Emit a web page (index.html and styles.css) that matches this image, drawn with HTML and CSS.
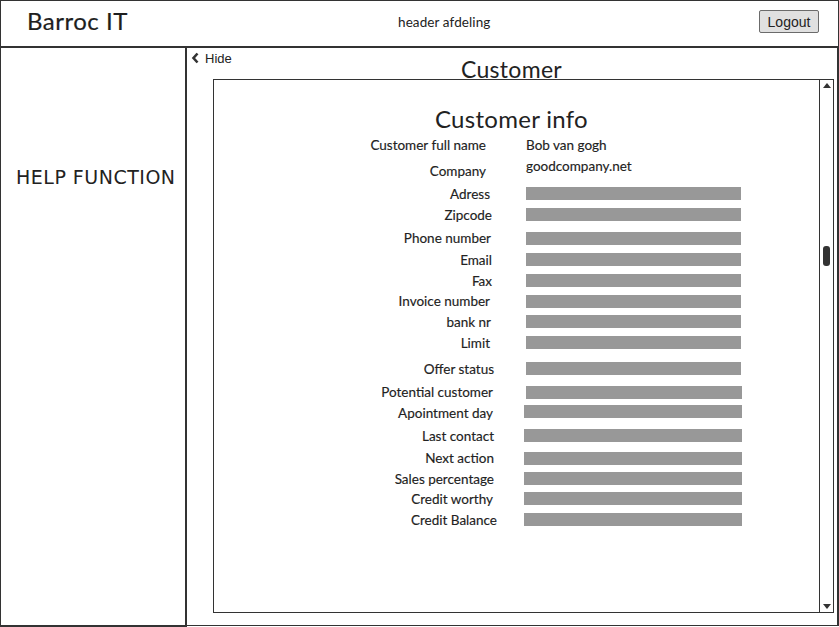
FILE: index.html
```html
<!DOCTYPE html>
<html>
<head>
<meta charset="utf-8">
<link rel="stylesheet" href="styles.css">
</head>
<body>
<div class="app">
  <header class="header">
    <div class="brand">Barroc IT</div>
    <div class="dept">header afdeling</div>
    <button class="logout">Logout</button>
  </header>
  <div class="body-row">
    <aside class="sidebar">
      <div class="help">HELP FUNCTION</div>
    </aside>
    <main class="main">
      <div class="hide">
        <svg class="chev" width="9" height="12" viewBox="0 0 9 12"><polyline points="6.5,1.5 2.5,6 6.5,10.5" fill="none" stroke="#333" stroke-width="2.6"/></svg>
        <span>Hide</span>
      </div>
      <h1 class="title">Customer</h1>
      <section class="panel">
        <div class="content">
          <h2 class="info-title">Customer info</h2>
          <div class="form">
            <div class="row h26"><span class="lbl lbl-short">Customer full name</span><span class="val">Bob van gogh</span></div>
            <div class="row h23"><span class="lbl lbl-short">Company</span><span class="val val-high">goodcompany.net</span></div>
            <div class="row"><span class="lbl lbl-r490">Adress</span><span class="bar"></span></div>
            <div class="row h23"><span class="lbl">Zipcode</span><span class="bar"></span></div>
            <div class="row h22"><span class="lbl lbl-r491">Phone number</span><span class="bar bar-low"></span></div>
            <div class="row"><span class="lbl">Email</span><span class="bar"></span></div>
            <div class="row h20"><span class="lbl">Fax</span><span class="bar"></span></div>
            <div class="row"><span class="lbl lbl-r490">Invoice number</span><span class="bar bar-low"></span></div>
            <div class="row"><span class="lbl lbl-r491">bank nr</span><span class="bar"></span></div>
            <div class="row h26"><span class="lbl lbl-r490">Limit</span><span class="bar"></span></div>
            <div class="row h23"><span class="lbl lbl-r494">Offer status</span><span class="bar"></span></div>
            <div class="row"><span class="lbl lbl-r493">Potential customer</span><span class="bar bar-long bar-low"></span></div>
            <div class="row h23"><span class="lbl lbl-r493">Apointment day</span><span class="bar bar-wide bar-high"></span></div>
            <div class="row h22"><span class="lbl lbl-r494">Last contact</span><span class="bar bar-wide"></span></div>
            <div class="row"><span class="lbl lbl-r494">Next action</span><span class="bar bar-wide bar-low"></span></div>
            <div class="row h20"><span class="lbl lbl-r494">Sales percentage</span><span class="bar bar-wide"></span></div>
            <div class="row"><span class="lbl lbl-r493">Credit worthy</span><span class="bar bar-wide"></span></div>
            <div class="row"><span class="lbl lbl-r497">Credit Balance</span><span class="bar bar-wide"></span></div>
          </div>
        </div>
        <div class="scrollbar">
          <span class="arrow-up"></span>
          <span class="thumb"></span>
          <span class="arrow-down"></span>
        </div>
      </section>
    </main>
  </div>
</div>
</body>
</html>
```

FILE: styles.css
```css
* { box-sizing: border-box; }
html, body { margin: 0; padding: 0; background: #fff; }
body {
  font-family: "Lato", "Open Sans", sans-serif;
  color: #222;
}
.app {
  width: 839px;
  height: 627px;
  overflow: hidden;
}
.header {
  height: 48px;
  border: 1.5px solid #333;
  border-bottom: 2px solid #333;
  display: flex;
  align-items: center;
  position: relative;
  padding: 0 19px 0 26px;
}
.brand {
  font-size: 24px;
  font-family: "Lato", sans-serif;
  letter-spacing: 0.5px;
  color: #1e1e1e;
  margin-top: -6px;
  -webkit-text-stroke: 0.2px #1e1e1e;
}
.dept {
  position: absolute;
  left: 397px;
  top: 13px;
  font-size: 13.5px;
  letter-spacing: 0.1px;
  font-family: "Lato", sans-serif;
}
.logout {
  margin-left: auto;
  margin-top: -4px;
  width: 60px;
  height: 23px;
  background: #e0e0e0;
  border: 1px solid #6b6b6b;
  border-radius: 2px;
  font-family: "Liberation Sans", Arial, sans-serif;
  font-size: 14px;
  color: #222;
  padding: 0;
}
.body-row {
  display: flex;
  height: 579px;
  margin-top: -1px;
}
.sidebar {
  width: 187px;
  height: 580px;
  border: 2px solid #333;
  border-top: none;
  border-left-width: 1.5px;
  display: flex;
  flex-direction: column;
}
.help {
  margin-top: 119px;
  padding-left: 15px;
  font-family: "DejaVu Sans", sans-serif;
  font-size: 19px;
  letter-spacing: 0.5px;
  color: #222;
}
.main {
  flex: 1;
  margin-left: -1px;
  height: 579px;
  border-right: 2px solid #333;
  border-bottom: 1.5px solid #333;
  display: flex;
  flex-direction: column;
  position: relative;
}
.hide {
  display: flex;
  align-items: center;
  gap: 5px;
  margin: 3px 0 0 5px;
  font-size: 13px;
  font-family: "Liberation Sans", Arial, sans-serif;
  height: 16px;
}
.chev { display: block; }
.title {
  margin: -9px 0 0 0;
  height: 22px;
  text-align: center;
  font-family: "Lato", sans-serif;
  font-weight: normal;
  font-size: 23px;
  line-height: 25px;
  letter-spacing: 0.3px;
  position: relative;
  z-index: 1;
}
.panel {
  margin: 0 3px 0 27px;
  height: 534px;
  border: 1.5px solid #333;
  display: flex;
}
.content {
  flex: 1;
  display: flex;
  flex-direction: column;
}
.info-title {
  margin: 25px 0 0 0;
  padding-right: 10px;
  text-align: center;
  font-family: "Lato", sans-serif;
  font-weight: normal;
  font-size: 24px;
  line-height: 28px;
  letter-spacing: 0.3px;
}
.form {
  display: flex;
  flex-direction: column;
  margin-top: 4px;
}
.row {
  height: 21px;
  display: flex;
  align-items: flex-start;
  position: relative;
}
.h20 { height: 20px; }
.h22 { height: 22px; }
.h23 { height: 23px; }
.h26 { height: 26px; }
.lbl {
  width: 278px;
  text-align: right;
  font-family: "Lato", sans-serif;
  font-size: 13.5px;
  line-height: 16px;
  white-space: nowrap;
  flex: none;
  -webkit-text-stroke: 0.15px #222;
}
.lbl-short { width: 272px; }
.lbl-r490 { width: 276px; }
.lbl-r491 { width: 277px; }
.lbl-r493 { width: 279px; }
.lbl-r494 { width: 280px; }
.lbl-r497 { width: 283px; }
.val {
  position: absolute;
  left: 312px;
  top: 0;
  font-family: "Lato", sans-serif;
  font-size: 13.5px;
  line-height: 16px;
  -webkit-text-stroke: 0.15px #222;
}
.val-high { top: -5px; }
.bar {
  position: absolute;
  left: 312px;
  width: 215px;
  height: 13px;
  background: #989898;
  top: 1px;
}
.bar-low { top: 2px; }
.bar-high { top: 0; }
.bar-long { width: 216px; }
.bar-wide { left: 310px; width: 218px; }
.scrollbar {
  width: 14px;
  border-left: 1.5px solid #333;
  display: flex;
  flex-direction: column;
  align-items: center;
  position: relative;
}
.arrow-up {
  margin-top: 3px;
  width: 0; height: 0;
  border-left: 4.5px solid transparent;
  border-right: 4.5px solid transparent;
  border-bottom: 5px solid #333;
}
.thumb {
  margin-top: 158px;
  width: 7px;
  height: 20px;
  border-radius: 3px;
  background: #333;
}
.arrow-down {
  margin-top: auto;
  margin-bottom: 3px;
  width: 0; height: 0;
  border-left: 4.5px solid transparent;
  border-right: 4.5px solid transparent;
  border-top: 5px solid #333;
}
```
